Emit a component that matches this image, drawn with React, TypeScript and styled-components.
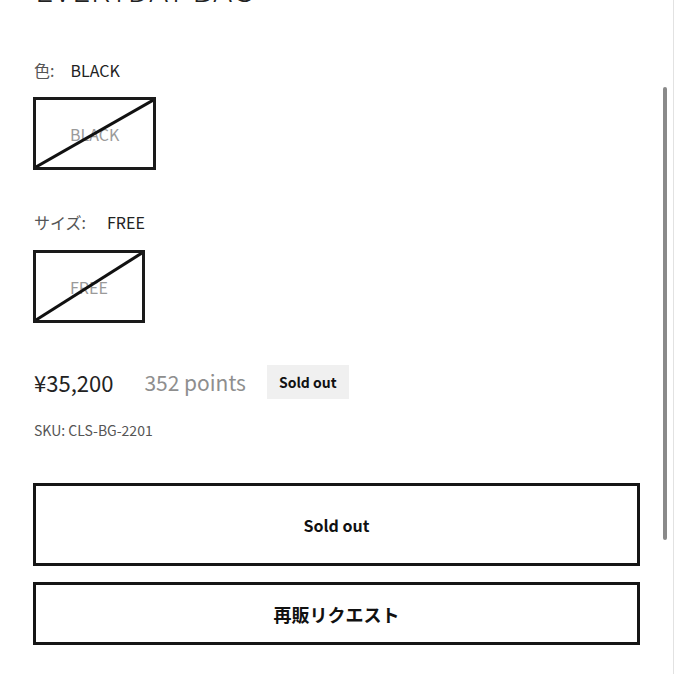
import React from "react";
import styled, { createGlobalStyle } from "styled-components";

const Global = createGlobalStyle`
  html, body { margin: 0; padding: 0; background: #fff; overflow: hidden; }
  body { font-family: "Noto Sans CJK JP", "Noto Sans", sans-serif; color: #222; }
`;

const Page = styled.div`
  position: relative;
  width: 674px;
  height: 674px;
  box-sizing: border-box;
  border-right: 1px solid #e2e2e2;
  overflow: hidden;
  padding: 0 33px 0 33px;
`;

const Title = styled.h1`
  margin: -32px 0 0 2px;
  font-size: 32px;
  line-height: 40px;
  font-weight: 300;
  letter-spacing: 0.5px;
  color: #222;
`;

const OptionLabel = styled.div<{ $top: number }>`
  display: flex;
  align-items: center;
  font-size: 16px;
  line-height: 24px;
  margin-top: ${(p) => p.$top}px;
  padding-left: 1px;
`;

const LabelName = styled.span`
  color: #555;
`;

const LabelValue = styled.span<{ $gap: number }>`
  color: #222;
  margin-left: ${(p) => p.$gap}px;
`;

const Swatch = styled.div<{ $top: number }>`
  position: relative;
  display: inline-flex;
  align-items: center;
  justify-content: center;
  box-sizing: border-box;
  height: 73px;
  padding: 0 34px;
  margin-top: ${(p) => p.$top}px;
  border: 3px solid #1a1a1a;
  color: #9a9a9a;
  font-size: 16px;
  line-height: 24px;
  align-self: flex-start;
`;

const Strike = styled.svg`
  position: absolute;
  inset: 0;
  width: 100%;
  height: 100%;
`;

const Column = styled.div`
  display: flex;
  flex-direction: column;
`;

const PriceRow = styled.div`
  display: flex;
  align-items: center;
  margin-top: 42px;
  padding-left: 1px;
`;

const Price = styled.span`
  font-size: 22px;
  color: #222;
`;

const Points = styled.span`
  font-size: 21px;
  color: #8e8e8e;
  margin-left: 31px;
`;

const Badge = styled.span`
  margin-left: 21px;
  background: #f0f0f0;
  font-size: 14px;
  font-weight: 700;
  line-height: 34px;
  padding: 0 12px;
  color: #111;
`;

const Sku = styled.div`
  margin-top: 19px;
  font-size: 14px;
  line-height: 24px;
  color: #555;
  padding-left: 1px;
`;

const Button = styled.button<{ $h: number; $top: number; $size: number }>`
  display: flex;
  align-items: center;
  justify-content: center;
  box-sizing: border-box;
  width: 100%;
  height: ${(p) => p.$h}px;
  margin-top: ${(p) => p.$top}px;
  background: #fff;
  border: 3px solid #151515;
  font-family: inherit;
  font-size: ${(p) => p.$size}px;
  font-weight: 700;
  color: #111;
  padding: 0;
`;

const ScrollThumb = styled.div`
  position: absolute;
  right: 6px;
  top: 87px;
  width: 4px;
  height: 453px;
  border-radius: 2px;
  background: #8a8a8a;
`;

function StrikeLine() {
  return (
    <Strike viewBox="0 0 100 100" preserveAspectRatio="none">
      <line x1="0" y1="100" x2="100" y2="0" stroke="#111" strokeWidth="3" vectorEffect="non-scaling-stroke" />
    </Strike>
  );
}

export default function App() {
  return (
    <>
      <Global />
      <Page>
        <Column>
          <Title>EVERYDAY BAG</Title>
          <OptionLabel $top={50}>
            <LabelName>色:</LabelName>
            <LabelValue $gap={16}>BLACK</LabelValue>
          </OptionLabel>
          <Swatch $top={15}>
            BLACK
            <StrikeLine />
          </Swatch>
          <OptionLabel $top={40}>
            <LabelName>サイズ:</LabelName>
            <LabelValue $gap={21}>FREE</LabelValue>
          </OptionLabel>
          <Swatch $top={16}>
            FREE
            <StrikeLine />
          </Swatch>
          <PriceRow>
            <Price>¥35,200</Price>
            <Points>352 points</Points>
            <Badge>Sold out</Badge>
          </PriceRow>
          <Sku>SKU: CLS-BG-2201</Sku>
          <Button $h={83} $top={41} $size={16}>Sold out</Button>
          <Button $h={63} $top={16} $size={18}>再販リクエスト</Button>
        </Column>
        <ScrollThumb />
      </Page>
    </>
  );
}
